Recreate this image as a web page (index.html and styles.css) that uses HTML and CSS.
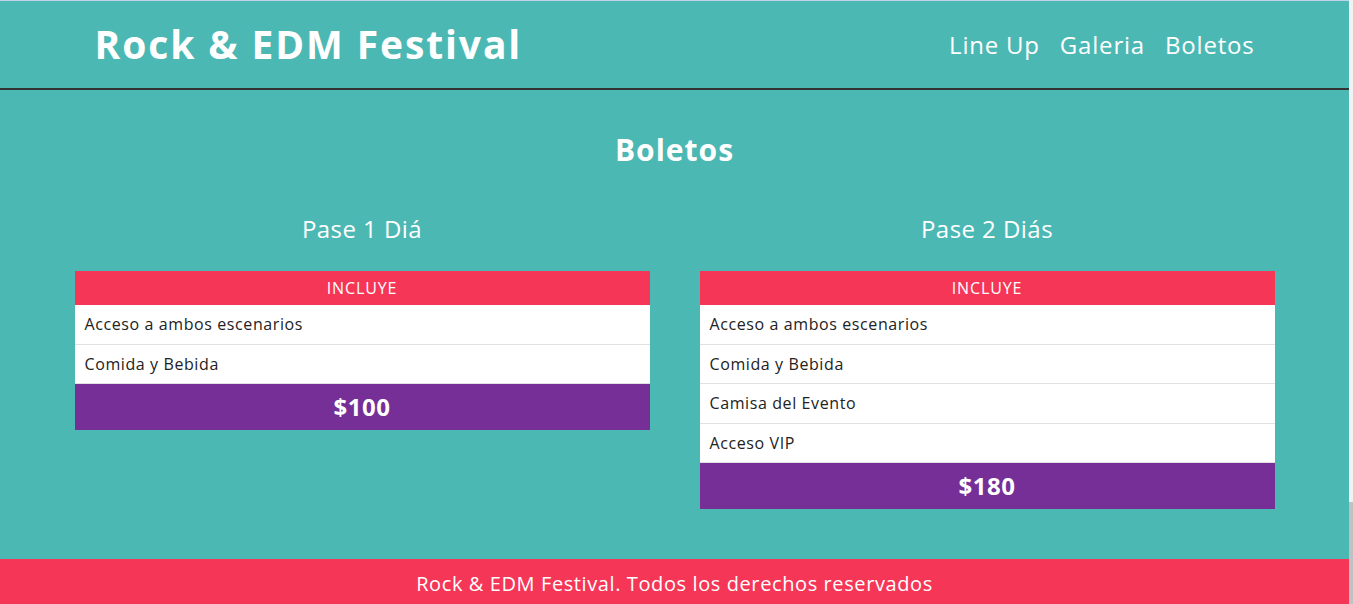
FILE: index.html
```html
<!DOCTYPE html>
<html lang="es">
<head>
<meta charset="utf-8">
<title>Rock &amp; EDM Festival</title>
<link rel="stylesheet" href="styles.css">
</head>
<body>
<header class="site-header">
  <div class="container header-inner">
    <h1 class="logo">Rock &amp; EDM Festival</h1>
    <nav class="nav">
      <a href="#">Line Up</a>
      <a href="#">Galeria</a>
      <a href="#">Boletos</a>
    </nav>
  </div>
</header>
<main class="container tickets">
  <h2 class="section-title">Boletos</h2>
  <div class="passes">
    <section class="pass">
      <h3 class="pass-title">Pase 1 Diá</h3>
      <div class="pass-card">
        <div class="pass-head">INCLUYE</div>
        <ul class="pass-list">
          <li>Acceso a ambos escenarios</li>
          <li>Comida y Bebida</li>
        </ul>
        <div class="pass-price">$100</div>
      </div>
    </section>
    <section class="pass">
      <h3 class="pass-title">Pase 2 Diás</h3>
      <div class="pass-card">
        <div class="pass-head">INCLUYE</div>
        <ul class="pass-list">
          <li>Acceso a ambos escenarios</li>
          <li>Comida y Bebida</li>
          <li>Camisa del Evento</li>
          <li>Acceso VIP</li>
        </ul>
        <div class="pass-price">$180</div>
      </div>
    </section>
  </div>
</main>
<footer class="site-footer">
  <p>Rock &amp; EDM Festival. Todos los derechos reservados</p>
</footer>
</body>
</html>
```

FILE: styles.css
```css
* { box-sizing: border-box; }
html {
  margin: 0;
  padding: 0;
  background: linear-gradient(to bottom, #f1f1f1 502px, #c1c1c1 502px);
}
body {
  margin: 0;
  padding: 0;
  width: calc(100% - 4px);
  background: #4cb8b4;
  font-family: "Open Sans", "Liberation Sans", sans-serif;
  color: #fff;
  height: 604px;
  display: flex;
  flex-direction: column;
}
.container {
  width: 1200px;
  margin: 0 auto;
}
.site-header {
  border-top: 1px solid #c3d2e6;
  border-bottom: 2px solid #333;
  height: 90px;
}
.header-inner {
  height: 87px;
  padding: 0 20px;
  display: flex;
  align-items: center;
  justify-content: space-between;
}
.logo {
  margin: 0 0 2px;
  font-size: 39px;
  font-weight: 700;
  letter-spacing: 1.9px;
}
.nav { display: flex; gap: 20px; }
.nav a {
  color: #fff;
  text-decoration: none;
  font-size: 24px;
  letter-spacing: 0.8px;
}
.tickets { flex: 1; }
.section-title {
  margin: 42px 0 0;
  text-align: center;
  font-size: 30px;
  line-height: 36px;
  font-weight: 700;
  letter-spacing: 1px;
}
.passes {
  margin-top: 46px;
  display: grid;
  grid-template-columns: 1fr 1fr;
  gap: 50px;
}
.pass-title {
  margin: 0 0 27px;
  text-align: center;
  font-size: 24px;
  line-height: 30px;
  font-weight: 400;
  letter-spacing: 0.45px;
}
.pass-card { background: #fff; }
.pass-head {
  background: #f53657;
  height: 34px;
  display: flex;
  align-items: center;
  justify-content: center;
  font-size: 16px;
  letter-spacing: 0.9px;
}
.pass-list {
  list-style: none;
  margin: 0;
  padding: 0;
}
.pass-list li {
  height: 39.5px;
  padding: 0 10px;
  display: flex;
  align-items: center;
  color: #222;
  font-size: 16px;
  letter-spacing: 0.6px;
  border-bottom: 1px solid #e1e1e1;
}
.pass-price {
  background: #752f97;
  height: 46px;
  padding-bottom: 2px;
  display: flex;
  align-items: center;
  justify-content: center;
  font-size: 24px;
  font-weight: 700;
  letter-spacing: 0.5px;
}
.site-footer {
  background: #f53657;
  height: 45px;
  padding-top: 4px;
  display: flex;
  align-items: center;
  justify-content: center;
}
.site-footer p {
  margin: 0;
  font-size: 20px;
  letter-spacing: 0.6px;
}
```
